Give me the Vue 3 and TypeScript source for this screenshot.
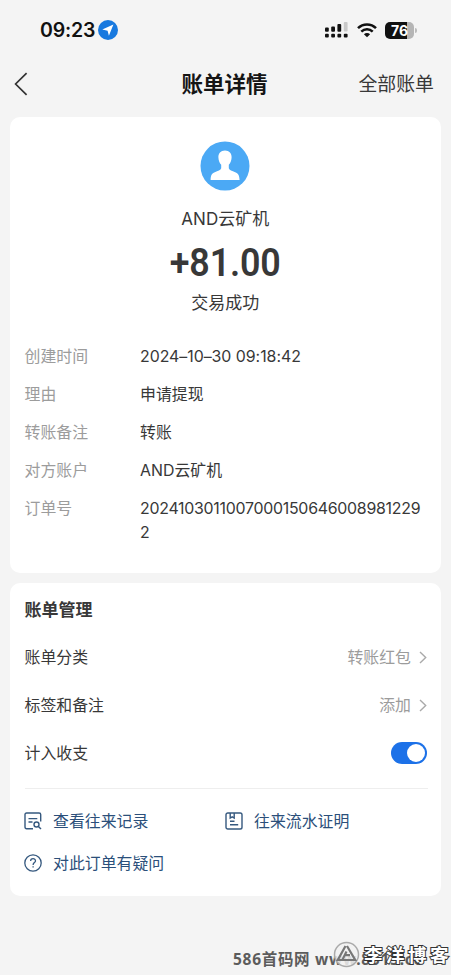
<script setup lang="ts">
interface Detail {
  label: string
  value: string
  numeric?: 'date' | 'order'
}

const details: Detail[] = [
  { label: '创建时间', value: '2024–10–30 09:18:42', numeric: 'date' },
  { label: '理由', value: '申请提现' },
  { label: '转账备注', value: '转账' },
  { label: '对方账户', value: 'AND云矿机' },
  { label: '订单号', value: '20241030110070001506460089812292', numeric: 'order' },
]

const settings = [
  { label: '账单分类', value: '转账红包' },
  { label: '标签和备注', value: '添加' },
]
</script>

<template>
  <div class="screen">
    <header class="status">
      <span class="clock">09:23</span>
      <svg class="location" width="20" height="20" viewBox="0 0 20 20">
        <circle cx="10" cy="10" r="10" fill="#1879df" />
        <path d="M15.4 4.6 10.9 15.7 9.6 10.7 4.3 9.4Z" fill="#fff" />
      </svg>
      <svg class="signal" width="23" height="16" viewBox="0 0 23 16" fill="#111">
        <rect x="0" y="5.5" width="3.8" height="4.3" rx="1" />
        <rect x="6.2" y="4.5" width="3.8" height="5.3" rx="1" />
        <rect x="12.4" y="2" width="3.8" height="7.8" rx="1" />
        <rect x="18.8" y="0" width="3.8" height="9.5" rx="1" fill="#c9c9c9" />
        <rect x="0" y="11.7" width="3.8" height="3.9" rx="1" />
        <rect x="6.2" y="11.7" width="3.8" height="3.9" rx="1" />
        <rect x="12.4" y="11.7" width="3.8" height="3.9" rx="1" />
        <rect x="18.8" y="11.7" width="3.8" height="3.9" rx="1" />
      </svg>
      <svg class="wifi" width="20" height="15" viewBox="0 0 20 15" fill="none" stroke="#111" stroke-width="2.5">
        <path d="M1 5.2C6 .2 14 .2 19 5.2" />
        <path d="M4.3 8.6C7.5 5.5 12.5 5.5 15.7 8.6" />
        <path d="M6.9 11.2C8.7 9.6 11.3 9.6 13.1 11.2L10 14.3Z" fill="#111" stroke="none" />
      </svg>
      <div class="battery"><span>76</span></div>
      <i class="battery-tip"></i>
    </header>

    <nav class="nav">
      <svg width="14" height="24" viewBox="0 0 14 24" fill="none" stroke="#333" stroke-width="1.7">
        <path d="M12.6 1.2 1.6 12 12.6 22.8" />
      </svg>
      <h1>账单详情</h1>
      <a>全部账单</a>
    </nav>

    <section class="card bill">
      <svg class="avatar" width="50" height="50" viewBox="0 0 50 50">
        <circle cx="25" cy="25" r="24.5" fill="#4ba9f5" />
        <path
          d="M25 9.5C20.7 9.5 18.2 12.5 18.4 16.6C18.5 20 19.7 22.2 21.2 23.8V27.3C20.8 29 17.8 30 14.8 31.2C11.8 32.4 10.7 34.2 10.6 39H39.6C39.4 34.2 38.2 32.4 35.2 31.2C32.2 30 29.2 29 28.8 27.3V23.8C30.3 22.2 31.5 20 31.6 16.6C31.8 12.5 29.3 9.5 25 9.5Z"
          fill="#fff"
        />
      </svg>
      <p class="payee">AND云矿机</p>
      <p class="amount">+81.00</p>
      <p class="state">交易成功</p>
      <dl class="details">
        <div v-for="item in details" :key="item.label" class="detail">
          <dt>{{ item.label }}</dt>
          <dd :class="item.numeric">{{ item.value }}</dd>
        </div>
      </dl>
    </section>

    <section class="card manage">
      <h2>账单管理</h2>
      <div v-for="item in settings" :key="item.label" class="setting">
        <span>{{ item.label }}</span>
        <span class="choice">{{ item.value }}</span>
        <svg width="8" height="13" viewBox="0 0 8 13" fill="none" stroke="#aaa" stroke-width="1.4">
          <path d="M1 1 6.7 6.5 1 12" />
        </svg>
      </div>
      <div class="setting">
        <span>计入收支</span>
        <span class="toggle"><i></i></span>
      </div>
      <div class="links">
        <a>
          <svg width="18" height="18" viewBox="0 0 18 18" fill="none" stroke="#36597f" stroke-width="1.4">
            <path d="M9 16.7H2.6Q1 16.7 1 15.1V2.6Q1 1 2.6 1H15.1Q16.7 1 16.7 2.6V9.5M4.5 6.6H13.3M4.5 10H8.5" />
            <circle cx="12.5" cy="12.5" r="2.5" />
            <path d="M14.4 14.4 17 17" />
          </svg>
          <span>查看往来记录</span>
        </a>
        <a>
          <svg width="18" height="18" viewBox="0 0 18 18" fill="none" stroke="#36597f" stroke-width="1.4">
            <rect x="1" y="1" width="16" height="16" rx="1.8" />
            <path d="M5.2 1V6L7.2 4.8 9.2 6V1M5 9.2H9.5M5 12.7H13.2" />
          </svg>
          <span>往来流水证明</span>
        </a>
        <a>
          <svg width="18" height="18" viewBox="0 0 18 18" fill="none" stroke="#36597f" stroke-width="1.3">
            <circle cx="9" cy="9" r="8.2" />
            <path d="M6.6 7.1C6.6 3.8 11.5 3.9 11.5 6.9C11.5 8.6 9.1 8.7 9.1 10.9M9.1 12.2V13.6" />
          </svg>
          <span>对此订单有疑问</span>
        </a>
      </div>
    </section>

    <div class="site-mark">586首码网 www.8515.co</div>
    <div class="blog-mark">
      <svg width="27" height="27" viewBox="0 0 27 27" fill="none">
        <circle cx="13.5" cy="13.5" r="12" fill="#f1f1f1" fill-opacity=".85" stroke="#aaa" stroke-width="1.5" />
        <path d="M12.5 5 4.8 19H9.3L13.5 10.5M14 5 22.2 19H10M12 14.2H17" stroke="#777" stroke-width="2.2" />
      </svg>
      <span>李洋博客</span>
    </div>
  </div>
</template>

<style>
body {
  margin: 0;
  background: #f4f4f4;
}
</style>

<style scoped>
.screen {
  position: relative;
  box-sizing: border-box;
  width: 451px;
  height: 975px;
  overflow: hidden;
  background: #f4f4f4;
  color: #383838;
  font-family: Inter, "Noto Sans CJK SC", sans-serif;
  font-size: 15.9px;
  line-height: 24px;
}

p, h1, h2, dl, dd {
  margin: 0;
}

.status {
  display: flex;
  align-items: center;
  box-sizing: border-box;
  height: 60px;
  padding: 0 34px 0 40px;
}

.clock {
  width: 58px;
  color: #111;
  font-size: 19.5px;
  font-weight: 600;
  letter-spacing: -0.2px;
}

.signal {
  margin-left: auto;
}

.wifi {
  margin: 0 8px 0 9px;
}

.battery {
  display: flex;
  justify-content: center;
  width: 29px;
  height: 17px;
  border-radius: 5px;
  background: linear-gradient(90deg, #111 76%, #b5b5b5 76%);
  color: #fff;
  font-size: 14px;
  font-weight: 700;
  line-height: 17px;
}

.battery-tip {
  width: 2px;
  height: 5px;
  margin-left: 1px;
  border-radius: 0 2px 2px 0;
  background: #bbb;
}

.nav {
  display: grid;
  grid-template-columns: 1fr auto 1fr;
  align-items: center;
  height: 48px;
  padding: 0 17px 0 14px;
}

.nav h1 {
  padding-left: 1px;
  color: #151515;
  font-size: 21.5px;
  font-weight: 700;
}

.nav a {
  justify-self: end;
  padding-top: 2px;
  font-size: 18.9px;
}

.card {
  box-sizing: border-box;
  margin: 0 10px;
  border-radius: 10px;
  background: #fff;
}

.bill {
  display: flex;
  flex-direction: column;
  align-items: center;
  height: 456px;
  margin-top: 9px;
  padding: 24px 15px 0 14.5px;
}

.payee {
  margin-top: 16px;
  font-size: 17px;
}

.amount {
  margin-top: 12px;
  font-family: Roboto, sans-serif;
  font-size: 39px;
  font-weight: 600;
  line-height: 40px;
  letter-spacing: -0.2px;
  transform: scaleX(0.92);
}

.state {
  margin-top: 8px;
  font-size: 17px;
}

.details {
  display: grid;
  gap: 14px;
  width: 100%;
  margin-top: 30px;
}

.detail {
  display: grid;
  grid-template-columns: 115.5px 1fr;
}

.detail dt {
  color: #9c9c9c;
}

.detail dd {
  word-break: break-all;
}

.detail .date {
  letter-spacing: -0.03px;
}

.detail .order {
  letter-spacing: -0.26px;
}

.manage {
  display: flex;
  flex-direction: column;
  height: 313px;
  margin-top: 10px;
  padding: 15px 14px 0 14.5px;
}

.manage h2 {
  margin-bottom: 11px;
  font-size: 17px;
  font-weight: 700;
}

.setting {
  display: flex;
  align-items: center;
  height: 48px;
}

.setting > span:not(.toggle),
.links span {
  padding-top: 2px;
}

.setting .choice {
  margin-left: auto;
  margin-right: 8px;
  color: #9c9c9c;
}

.toggle {
  display: flex;
  justify-content: flex-end;
  box-sizing: border-box;
  width: 36px;
  height: 22px;
  margin-left: auto;
  padding: 2px;
  border-radius: 11px;
  background: #1c71e8;
}

.toggle i {
  width: 18px;
  height: 18px;
  border-radius: 50%;
  background: #fff;
}

.links {
  display: grid;
  grid-template-columns: 201px 1fr;
  margin-top: 11px;
  margin-right: -1px;
  padding-top: 11px;
  border-top: 1px solid #eee;
}

.links a {
  display: flex;
  align-items: center;
  gap: 11px;
  height: 42px;
  margin-left: -0.5px;
  color: #2b4f7a;
}

.site-mark {
  position: absolute;
  top: 947px;
  left: 233px;
  color: #5c5c5c;
  font-family: "Noto Sans", "Noto Sans CJK SC", sans-serif;
  font-weight: 700;
  font-size: 15.5px;
  letter-spacing: 0.7px;
  white-space: nowrap;
}

.blog-mark {
  position: absolute;
  top: 941px;
  left: 333px;
  display: flex;
  align-items: center;
  gap: 4px;
}

.blog-mark span {
  color: #fff;
  font-size: 18.5px;
  font-weight: 700;
  letter-spacing: 3.5px;
  white-space: nowrap;
  margin-right: -4px;
  -webkit-text-stroke: 2px #333;
  paint-order: stroke fill;
}
</style>
